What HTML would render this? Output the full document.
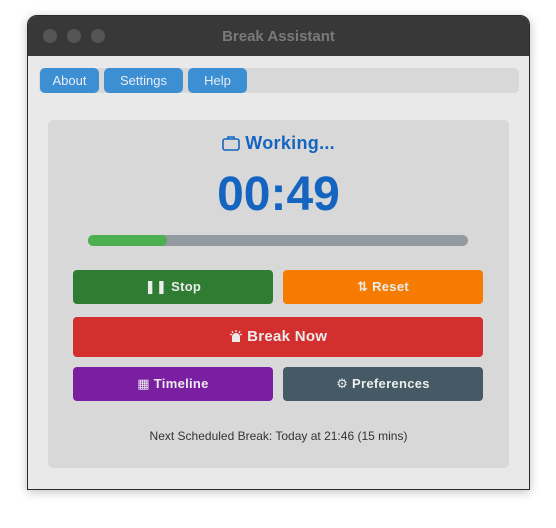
<!DOCTYPE html>
<html><head><style>
*{margin:0;padding:0;box-sizing:border-box}
body{width:556px;height:528px;background:#fff;position:relative;font-family:"Liberation Sans","DejaVu Sans",sans-serif;overflow:hidden}
.win{position:absolute;left:27px;top:15px;width:503px;height:475px;border:1px solid #2a2a2a;border-radius:10px 10px 0 0;background:#e9e9e9;overflow:hidden;box-shadow:0 2px 10px rgba(0,0,0,.25)}
.tb{height:40px;background:#383838;position:relative}
.dot{position:absolute;top:13px;width:14px;height:14px;border-radius:50%;background:#555}
.title{position:absolute;left:0;right:0;top:12px;text-align:center;color:#7a7a7a;font-weight:bold;font-size:15px}
.bar{position:absolute;left:11px;top:52px;width:480px;height:25px;background:#d8d8d8;border-radius:5px}
.tab{position:absolute;top:0;height:25px;background:#3d8fd4;color:#e8eef6;font-size:13px;text-align:center;line-height:25px;border-radius:5px}
.card{position:absolute;left:20px;top:104px;width:461px;height:348px;background:#d8d8d8;border-radius:5px}
.abs{position:absolute}
.btn{position:absolute;color:#ececec;font-weight:bold;font-size:13px;text-align:center;border-radius:4px;letter-spacing:.3px}
</style></head><body>
<div class="win">
<div class="tb"><div class="dot" style="left:15px"></div><div class="dot" style="left:39px"></div><div class="dot" style="left:63px"></div><div class="title">Break Assistant</div></div>
<div class="bar">
<div class="tab" style="left:1px;width:59px">About</div>
<div class="tab" style="left:65px;width:79px">Settings</div>
<div class="tab" style="left:149px;width:59px">Help</div>
</div>
<div class="card">
<div class="abs" style="left:0;right:0;top:13px;text-align:center;color:#1565c0;font-weight:bold;font-size:18px;letter-spacing:.3px">
<svg width="18" height="16" viewBox="0 0 18 16" style="vertical-align:-2px"><rect x="1" y="4" width="16" height="11" rx="2" fill="none" stroke="#1565c0" stroke-width="1.6"/><path d="M6 4V2h6v2" fill="none" stroke="#1565c0" stroke-width="1.6"/></svg> Working...</div>
<div class="abs" style="left:0;right:0;top:47px;text-align:center;color:#1565c0;font-weight:bold;font-size:48px;letter-spacing:0px">00:49</div>
<div class="abs" style="left:40px;top:115px;width:380px;height:11px;background:#939ba1;border-radius:6px"><div style="width:79px;height:11px;background:#4caf50;border-radius:6px"></div></div>
<div class="btn" style="left:25px;top:150px;width:200px;height:34px;line-height:34px;background:#2e7d32">❚❚ Stop</div>
<div class="btn" style="left:235px;top:150px;width:200px;height:34px;line-height:34px;background:#f57c00">⇅ Reset</div>
<div class="btn" style="left:25px;top:197px;width:410px;height:40px;line-height:40px;background:#d32f2f;font-size:15px"><svg width="14" height="14" viewBox="0 0 14 14" style="vertical-align:-2px"><path d="M3 13V8a4 4 0 0 1 8 0v5z" fill="#ececec"/><path d="M1 5l2 1M13 5l-2 1M7 1v2M3 2l1 2M11 2l-1 2" stroke="#ececec" stroke-width="1.2"/></svg> Break Now</div>
<div class="btn" style="left:25px;top:247px;width:200px;height:34px;line-height:34px;background:#7b1fa2">▦ Timeline</div>
<div class="btn" style="left:235px;top:247px;width:200px;height:34px;line-height:34px;background:#455a64">⚙ Preferences</div>
<div class="abs" style="left:0;right:0;top:309px;text-align:center;color:#333;font-size:12px">Next Scheduled Break: Today at 21:46 (15 mins)</div>
</div>
</div>
</body></html>
